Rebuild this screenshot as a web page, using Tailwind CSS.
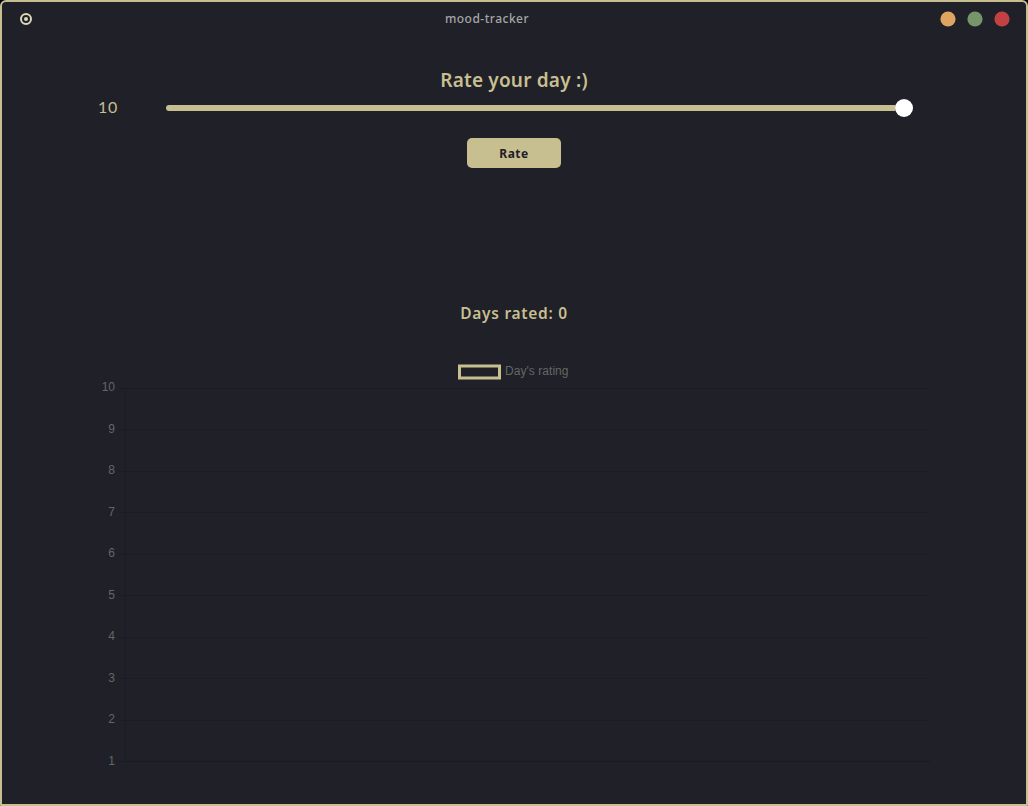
<!DOCTYPE html>
<html lang="en">
<head>
<meta charset="utf-8">
<title>mood-tracker</title>
<script src="https://cdn.jsdelivr.net/npm/@tailwindcss/browser@4"></script>
</head>
<body class="bg-black overflow-hidden">
<div class="w-[1028px] h-[806px] flex flex-col bg-[#1f2028] border-2 border-[#c8bf90] rounded-t-[6px] rounded-b-[1px] text-[#c8bf90]">
  <header class="h-[34px] shrink-0 flex items-center pl-[18px] pr-4">
    <svg class="size-3 shrink-0" viewBox="0 0 12 12"><circle cx="6" cy="6" r="5" fill="none" stroke="#ddd8bc" stroke-width="2"/><circle cx="6" cy="6" r="2" fill="#ddd8bc"/></svg>
    <span class="grow text-center pl-[2px] font-['Noto_Sans'] font-medium text-[12px] leading-4 tracking-[0.5px] text-[#a6a6a7]">mood-tracker</span>
    <div class="flex justify-end gap-[11px]">
      <svg class="size-4" viewBox="0 0 16 16"><circle cx="8" cy="8" r="7.6" fill="#dea560"/></svg>
      <svg class="size-4" viewBox="0 0 16 16"><circle cx="8" cy="8" r="7.6" fill="#76956a"/></svg>
      <svg class="size-4" viewBox="0 0 16 16"><circle cx="8" cy="8" r="7.6" fill="#c34043"/></svg>
    </div>
  </header>
  <main class="flex flex-col items-center">
    <h1 class="mt-[30px] h-7 leading-7 font-['Noto_Sans'] font-semibold text-[19px] tracking-[0.2px] whitespace-nowrap">Rate your day :)</h1>
    <div class="w-full h-6 mt-0.5 flex items-center pl-24">
      <span class="w-[68px] font-['Lato'] text-[16px] leading-[22px] pb-0.5 tracking-[0.6px]">10</span>
      <div class="w-[747px] h-[18px] flex items-center">
        <div class="grow h-1.5 rounded-l-full bg-[#c8bf90]"></div>
        <div class="size-[18px] rounded-full bg-white"></div>
      </div>
    </div>
    <button class="mt-[18px] w-[94px] h-[30px] pt-px rounded-[5px] bg-[#c8bf90] text-[#1f2028] font-['Noto_Sans'] font-bold text-[12px] tracking-[0.5px]">Rate</button>
    <h2 class="mt-[133px] h-6 leading-6 font-['Noto_Sans'] font-semibold text-[15.5px] tracking-[0.7px] whitespace-nowrap">Days rated: 0</h2>
    <svg class="mt-[33px] w-[860px] h-[420px]" viewBox="84 358 860 420" font-family="'Liberation Sans', sans-serif" font-size="12" fill="#666666">
      <rect x="459.5" y="366" width="40" height="12" fill="none" stroke="#c8bf90" stroke-width="3"/>
      <text x="505" y="375" textLength="63.5">Day's rating</text>
      <g stroke="#1c1d24" stroke-width="1" fill="none">
        <path d="M119 388.5H930M119 429.5H930M119 471.5H930M119 512.5H930M119 554.5H930M119 595.5H930M119 637.5H930M119 678.5H930M119 720.5H930M119 761.5H125"/>
        <path d="M125.5 388V762"/>
        <path stroke="#191a20" d="M125 761.5H930"/>
      </g>
      <g text-anchor="end">
        <text x="115" y="391">10</text><text x="115" y="433">9</text><text x="115" y="474">8</text><text x="115" y="516">7</text><text x="115" y="557">6</text><text x="115" y="599">5</text><text x="115" y="640">4</text><text x="115" y="682">3</text><text x="115" y="723">2</text><text x="115" y="765">1</text>
      </g>
    </svg>
  </main>
</div>
</body>
</html>
